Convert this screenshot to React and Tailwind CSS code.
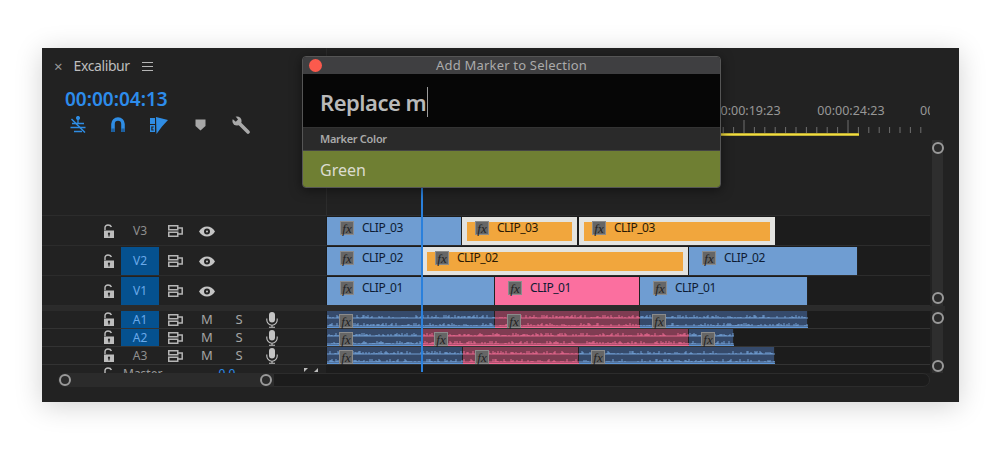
import React from "react";

const BLUE = "bg-[#6f9dd2]";

const VIDEO_TRACKS = [
  {
    name: "V3",
    clips: [
      { w: 135, label: "CLIP_03" },
      { w: 115, label: "CLIP_03", selected: true, gap: 2 },
      { w: 196, label: "CLIP_03", selected: true },
    ],
  },
  {
    name: "V2",
    active: true,
    clips: [
      { w: 95, label: "CLIP_02" },
      { w: 266, label: "CLIP_02", selected: true, gap: 1 },
      { w: 169, label: "CLIP_02" },
    ],
  },
  {
    name: "V1",
    active: true,
    clips: [
      { w: 168, label: "CLIP_01" },
      { w: 145, label: "CLIP_01", pink: true },
      { w: 168, label: "CLIP_01" },
    ],
  },
];

const AUDIO_TRACKS = [
  { name: "A1", active: true, clips: [{ w: 168 }, { w: 145, pink: true }, { w: 168 }] },
  { name: "A2", active: true, clips: [{ w: 95 }, { w: 267, pink: true }, { w: 45 }] },
  { name: "A3", clips: [{ w: 136 }, { w: 116, pink: true }, { w: 196 }] },
];

// fixed noise so the waveform is the same on every load
const noise = (i) => {
  const s = Math.sin(i * 12.9898) * 43758.5453;
  return s - Math.floor(s);
};

const wavePath = (w, seed, base) => {
  let d = `M0 ${base}H${w} `;
  for (let x = 1; x < w; x += 1) {
    const n = noise(x + seed);
    if (n > 0.55) d += `M${x} ${base}V${base - (n > 0.9 ? 3 : n > 0.75 ? 2 : 1)} `;
  }
  return d;
};

const Wave = ({ w, pink, seed }) => (
  <svg width={w} height="17" className="absolute left-0 top-0" fill="none">
    <path d={wavePath(w, seed, 7)} stroke={pink ? "#ee6a92" : "#76a6de"} strokeWidth="1" opacity="0.9" />
    <path d={wavePath(w, seed + 91, 15)} stroke={pink ? "#ee6a92" : "#76a6de"} strokeWidth="1" opacity="0.9" />
    <path d={`M0 16.5H${w}`} stroke={pink ? "#f06a94" : "#5f96d6"} strokeWidth="1" />
  </svg>
);

const Fx = ({ className = "" }) => (
  <div
    className={`flex h-[14px] w-[14px] flex-none items-center justify-center border border-[#8b8b8b] bg-[#666] font-['Liberation_Serif',serif] text-[13px] italic leading-none text-[#222] ${className}`}
  >
    fx
  </div>
);

const VideoClip = ({ clip }) => {
  const { w, label, selected, pink, gap = 0 } = clip;
  if (selected) {
    return (
      <div
        className="flex h-[28px] flex-none items-start border-x-[5px] border-b-[4px] border-t-[5px] border-[#e3e3e0] bg-[#f1a63d] pl-[8px]"
        style={{ width: w, marginRight: gap }}
      >
        <Fx className="-mt-[1px]" />
        <span className="-mt-[1px] ml-[8px] text-[12px] leading-[14px] tracking-[-0.5px] text-[#2a1a05]">{label}</span>
      </div>
    );
  }
  return (
    <div
      className={`flex h-[28px] flex-none items-start border-r border-[#222] pl-[13px] pt-[4px] ${pink ? "bg-[#fb6f9f]" : BLUE}`}
      style={{ width: w }}
    >
      <Fx />
      <span className="ml-[8px] text-[12px] leading-[14px] tracking-[-0.5px] text-[#0e1c33]">{label}</span>
    </div>
  );
};

const AudioClip = ({ clip, seed }) => (
  <div
    className={`relative h-[17px] flex-none border-r border-[#222] pl-[12px] pt-[3px] ${clip.pink ? "bg-[#7f3c52]" : "bg-[#354a6b]"}`}
    style={{ width: clip.w }}
  >
    <Wave w={clip.w} pink={clip.pink} seed={seed} />
    <Fx className="relative" />
  </div>
);

const LockIcon = () => (
  <svg width="12" height="15" viewBox="0 0 12 15" fill="none">
    <path d="M2 6V3.6C2 2 3.2 1 5 1s3 .8 3.4 2" stroke="#bdbdbd" strokeWidth="1.4" />
    <path fillRule="evenodd" d="M1 6.5h10V14H1zM6 8.6a1.2 1.2 0 0 0-.6 2.2V12.4h1.2v-1.6A1.2 1.2 0 0 0 6 8.6z" fill="#bdbdbd" />
  </svg>
);

const OutputIcon = () => (
  <svg width="15" height="12" viewBox="0 0 15 12" fill="none" stroke="#b5b5b5" strokeWidth="1.5">
    <rect x="0.75" y="0.75" width="9" height="4" />
    <rect x="0.75" y="7.25" width="9" height="4" />
    <path d="M10 3h4.2v6H10" />
  </svg>
);

const EyeIcon = () => (
  <svg width="16" height="11" viewBox="0 0 16 11">
    <path
      fillRule="evenodd"
      d="M0 5.5C2 2 4.8.5 8 .5s6 1.5 8 5c-2 3.500-4.800 5-8 5s-6-1.500-8-5zm8-3a3 3 0 1 0 0 6 3 3 0 0 0 0-6z"
      fill="#c4c4c4"
    />
    <circle cx="8" cy="5.500" r="1" fill="#c4c4c4" />
  </svg>
);

const MicIcon = () => (
  <svg width="12" height="16" viewBox="0 0 12 16" fill="none">
    <rect x="3" y="0" width="6" height="10.500" rx="3" fill="#c4c4c4" />
    <path d="M.8 6.500V8a5.200 5.200 0 0 0 10.400 0V6.500M6 13.200V15M3 15.300h6" stroke="#c4c4c4" strokeWidth="1.100" />
  </svg>
);

const TrackHeader = ({ track, audio }) => (
  <div className={`flex h-full w-[284px] flex-none items-center ${audio ? "" : "pt-[1px]"}`}>
    <div className="flex h-full w-[79px] flex-none items-center justify-end pr-[6px]">
      <LockIcon />
    </div>
    <div
      className={`flex h-full w-[38px] flex-none items-center justify-center text-[12px] ${
        track.active ? "bg-[#05518f] text-[#6aa9ea]" : "text-[#8f8f8f]"
      }`}
    >
      {track.name}
    </div>
    <div className="flex w-[32px] flex-none justify-center">
      <OutputIcon />
    </div>
    <div className="flex w-[32px] flex-none justify-center text-[13px] text-[#a5a5a5]">{audio ? "M" : <EyeIcon />}</div>
    {audio && <div className="flex w-[32px] flex-none justify-center text-[13px] text-[#a5a5a5]">S</div>}
    {audio && (
      <div className="flex w-[34px] flex-none justify-center">
        <MicIcon />
      </div>
    )}
  </div>
);

const Handle = () => (
  <div className="h-[12px] w-[12px] flex-none rounded-full border-[2.5px] border-[#9a9a9a] bg-[#2b2b2b]" />
);

const ToolIcons = () => (
  <div className="mt-[5px] flex items-center pl-[27px]">
    {/* nest */}
    <svg width="18" height="18" viewBox="0 0 18 18" fill="none" stroke="#2f8de4" strokeWidth="1.300">
      <path d="M9 2v6M3 7.500h12M1.500 11.500h15M5 15.500h8" />
      <path d="M2.500 3 16 16.500" strokeWidth="1.500" />
      <circle cx="9" cy="2" r="1.400" fill="#2f8de4" />
    </svg>
    {/* snap */}
    <svg className="ml-[24px]" width="14" height="16" viewBox="0 0 14 16" fill="none">
      <path d="M2 15V7a5 5 0 0 1 10 0v8" stroke="#2f8de4" strokeWidth="3.600" />
      <path d="M.2 11.500h3.600V15H.2zM10.200 11.500h3.600V15h-3.600z" fill="#1c5f9f" />
    </svg>
    {/* linked selection */}
    <svg className="ml-[25px]" width="18" height="17" viewBox="0 0 18 17">
      <path d="M0 1h5v6H0z" fill="#2f8de4" />
      <path fillRule="evenodd" d="M0 8h5v7H0zM1.300 9.500v4h2.400v-1H2.500v-2h1.200v-1z" fill="#2f8de4" />
      <path d="M6 0l12 3-6 6.500L6.500 17z" fill="#2f8de4" />
    </svg>
    {/* marker */}
    <svg className="ml-[27px]" width="11" height="12" viewBox="0 0 11 12">
      <path d="M.5.500h10v6.500L5.500 11.500.5 7z" fill="#a8a8a8" />
    </svg>
    {/* wrench */}
    <svg className="ml-[26px]" width="18" height="18" viewBox="0 0 18 18" fill="none">
      <path d="M6 6 16 16" stroke="#a9a9a9" strokeWidth="3.600" strokeLinecap="round" />
      <circle cx="5" cy="5" r="4.600" fill="#a9a9a9" />
      <path d="M-1 1.500 3.800 5.800 6 3.500 2.500-1z" fill="#222" />
    </svg>
  </div>
);

const Ruler = () => {
  const ticks = [];
  // every 10th tick is a long one, the long ones sit at 744 and 848 on the page
  for (let i = -30; i < 19; i += 1) {
    const x = 417 + i * 10.4;
    if (x < 0) continue;
    ticks.push(<path key={i} d={`M${x} ${i % 10 === 0 ? 0 : 7}V13`} stroke="#6f6f6f" strokeWidth="1" />);
  }
  return (
    <div className="h-full w-[604px] flex-none overflow-hidden border-l border-[#2c2c2c] pt-[54px]">
      <div className="flex h-[18px] pl-[368px] text-[12.500px] leading-[18px] text-[#979797]">
        <div className="w-[104px] flex-none text-center">00:00:19:23</div>
        <div className="w-[104px] flex-none text-center">00:00:24:23</div>
        <div className="w-[104px] flex-none pl-[17px]">00:00:29:23</div>
      </div>
      <svg width="604" height="20" className="block" fill="none">
        {ticks}
        <path d="M0 14.500H532" stroke="#f3de3e" strokeWidth="2.500" />
      </svg>
    </div>
  );
};

const Dialog = () => (
  <div className="absolute left-[260px] top-[8px] z-10 w-[419px] overflow-hidden rounded-[4px] border border-[#555] shadow-[0_2px_12px_rgba(0,0,0,0.5)]">
    <div className="relative flex h-[17px] items-center justify-center bg-[#3f3f41] text-[13px] tracking-[0.2px] text-[#ababab]">
      <div className="absolute left-[6px] top-[2px] h-[13px] w-[13px] rounded-full bg-[#fb5a4d]" />
      Add Marker to Selection
    </div>
    <div className="flex h-[53px] items-center bg-[#060606] pl-[17px] pt-[3px]">
      <span className="text-[22px] font-semibold tracking-[-0.5px] text-[#b9b9b9]">Replace m</span>
      <div className="ml-[1px] h-[30px] w-[1px] bg-[#9a9a9a]" />
    </div>
    <div className="flex h-[23px] items-center border-t border-[#333] bg-[#2a2a2a] pl-[17px] text-[11px] font-semibold tracking-[-0.3px] text-[#a9a9a9]">
      Marker Color
    </div>
    <div className="flex h-[37px] items-center border-t border-[#444] bg-[#6f7f33] pl-[17px] pt-[2px] text-[16px] text-[#dcdcd0]">
      Green
    </div>
  </div>
);

export default function App() {
  return (
    <div className="h-[456px] w-[1000px] overflow-hidden bg-white pl-[42px] pt-[48px] font-['Noto_Sans',sans-serif]">
      <div className="relative flex h-[354px] w-[917px] bg-[#222] shadow-[0_4px_26px_rgba(0,0,0,0.18)]">
        <Dialog />

        {/* playhead */}
        <div className="absolute left-[379px] top-[130px] z-[5] h-[194px] w-[2px] bg-[#2a80dc]" />

        <div className="flex w-[888px] flex-none flex-col">
          {/* panel header + ruler */}
          <div className="flex h-[168px] flex-none border-b border-[#2c2c2c]">
            <div className="w-[284px] flex-none">
              <div className="flex items-center pl-[12px] pt-[8px] text-[#bdbdbd]">
                <span className="text-[15px] leading-[20px] text-[#999]">×</span>
                <span className="ml-[11px] text-[14px] leading-[20px] tracking-[-0.4px]">Excalibur</span>
                <svg className="ml-[12px]" width="11" height="9" viewBox="0 0 11 9" stroke="#b5b5b5" fill="none">
                  <path d="M0 .5h11M0 4.500h11M0 8.500h11" />
                </svg>
              </div>
              <div className="mt-[11px] pl-[23px] text-[19px] font-semibold leading-[24px] text-[#2d8ceb]">00:00:04:13</div>
              <ToolIcons />
            </div>
            <Ruler />
          </div>

          {/* video tracks */}
          {VIDEO_TRACKS.map((track) => (
            <div key={track.name} className="flex h-[30px] flex-none border-b border-[#2c2c2c]">
              <TrackHeader track={track} />
              <div className="flex h-full w-[604px] flex-none bg-[#1c1c1c] pl-[1px] pt-[1px]">
                {track.clips.map((clip, i) => (
                  <VideoClip key={i} clip={clip} />
                ))}
              </div>
            </div>
          ))}

          <div className="h-[5px] flex-none bg-[#2b2b2b]" />

          {/* audio tracks */}
          {AUDIO_TRACKS.map((track, t) => (
            <div key={track.name} className="flex h-[18px] flex-none border-b border-[#333]">
              <TrackHeader track={track} audio />
              <div className="flex h-full w-[604px] flex-none bg-[#1c1c1c] pl-[1px]">
                {track.clips.map((clip, i) => (
                  <AudioClip key={i} clip={clip} seed={t * 300 + i * 70} />
                ))}
              </div>
            </div>
          ))}

          {/* master track, almost scrolled away */}
          <div className="flex h-[8px] flex-none overflow-hidden">
            <div className="flex w-[284px] flex-none items-start text-[12px] leading-[16px] text-[#999]">
              <div className="flex w-[79px] flex-none justify-end pr-[6px] pt-[2px]">
                <LockIcon />
              </div>
              <span className="ml-[2px] mt-[1px]">Master</span>
              <span className="ml-[56px] mt-[1px] text-[#2d8ceb]">0.0</span>
              <svg className="ml-[69px] mt-[3px]" width="14" height="5" viewBox="0 0 14 5" fill="#bbb">
                <path d="M0 0h4L0 4zM14 0v4l-4 0z" />
              </svg>
            </div>
            <div className="h-full w-[604px] flex-none bg-[#1c1c1c]" />
          </div>

          {/* horizontal scrollbar */}
          <div className="flex h-[14px] flex-none pl-[16px]">
            <div className="flex h-full w-[215px] flex-none items-center justify-between rounded-l-full bg-[#2b2b2b] px-[1px]">
              <Handle />
              <Handle />
            </div>
            <div className="h-full w-[657px] flex-none rounded-r-full border border-[#2c2c2c] bg-[#1c1c1c]" />
          </div>
        </div>

        {/* vertical zoom bars */}
        <div className="flex w-[29px] flex-none flex-col pl-[2px] pt-[92px]">
          <div className="flex h-[166px] w-[11px] flex-none flex-col items-center justify-between bg-[#2e2e2e] pb-[2px] pt-[2px]">
            <Handle />
            <Handle />
          </div>
          <div className="-ml-[2px] h-[5px] w-[15px] flex-none bg-[#2b2b2b]" />
          <div className="flex h-[62px] w-[11px] flex-none flex-col items-center justify-between bg-[#2e2e2e] py-[1px]">
            <Handle />
            <Handle />
          </div>
        </div>
      </div>
    </div>
  );
}
